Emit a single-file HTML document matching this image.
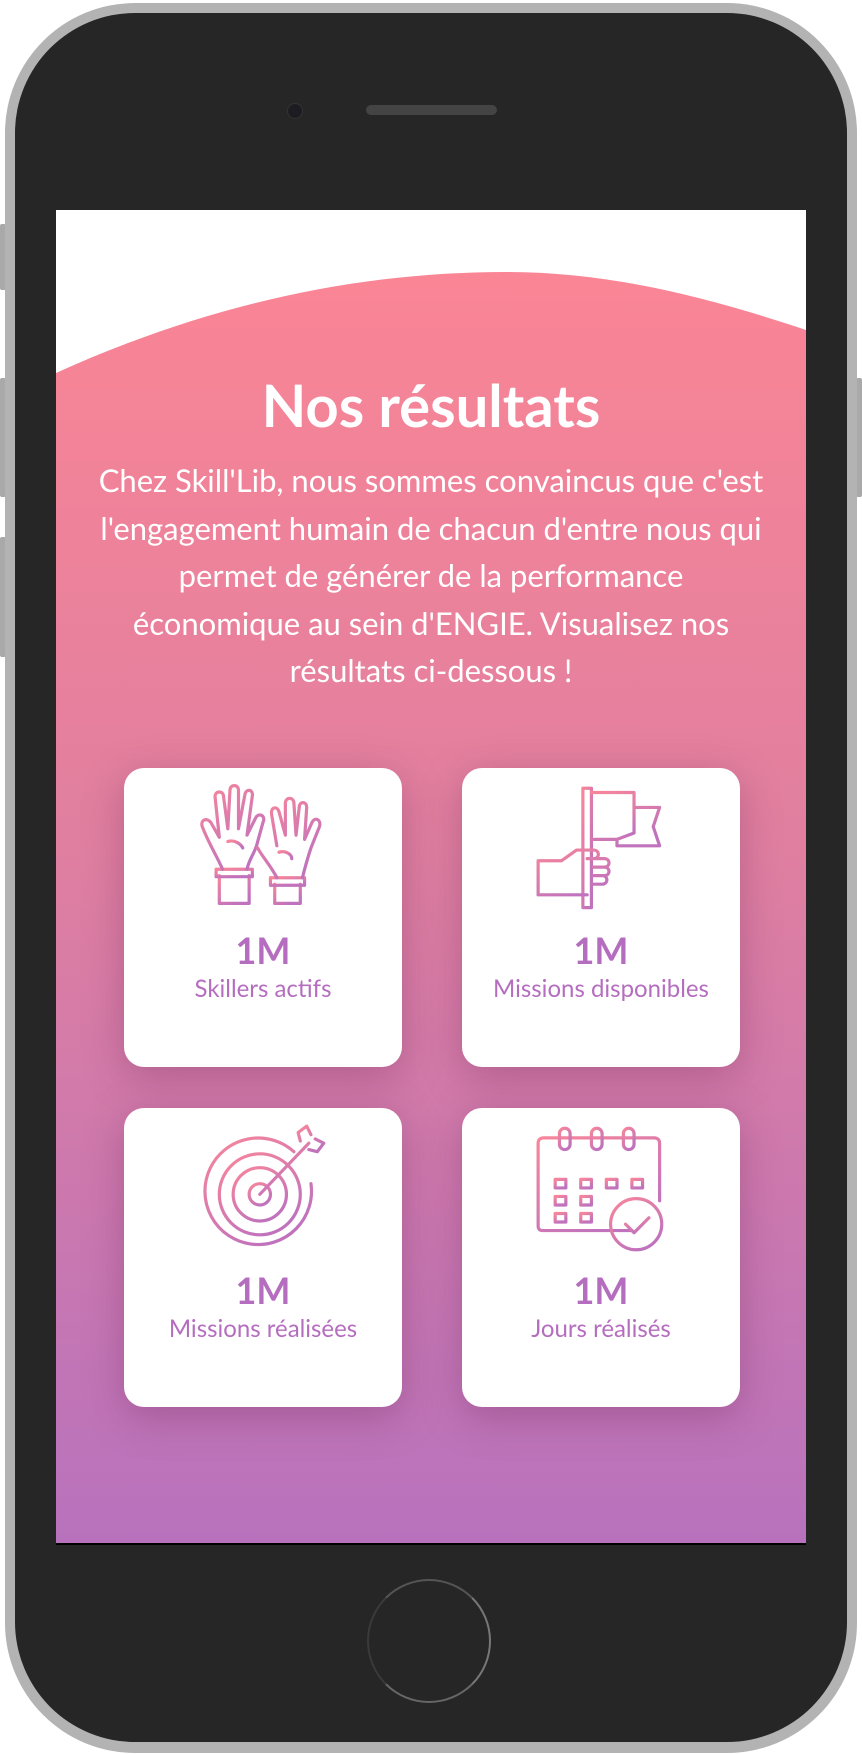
<!DOCTYPE html>
<html><head><meta charset="utf-8">
<style>
html,body{margin:0;padding:0;background:#fff;}
body{width:862px;height:1754px;position:relative;overflow:hidden;font-family:"Lato","Liberation Sans",sans-serif;}
.outer{position:absolute;left:5px;top:3px;width:852px;height:1750px;border-radius:130px;background:#b3b3b3;}
.inner{position:absolute;left:15px;top:13px;width:832px;height:1729px;border-radius:120px;background:#262626;}
.btn{position:absolute;background:#a9a9a9;width:6px;border-radius:2px;}
.screen{position:absolute;left:56px;top:210px;width:750px;height:1333px;background:#fff;overflow:hidden;border-bottom:2px solid #000;}
.cam{position:absolute;left:287px;top:103px;width:14px;height:14px;border-radius:50%;background:#1c1c22;border:1px solid #333;}
.spk{position:absolute;left:366px;top:105px;width:131px;height:10px;border-radius:5px;background:#444;}
.home{position:absolute;left:367px;top:1579px;width:124px;height:124px;border-radius:50%;border:2px solid #3a3a3a;box-sizing:border-box;border-color:#555 #777 #666 #3a3a3a;}
h1{position:absolute;left:0;width:750px;top:161px;margin:0;text-align:center;color:#fff;font-size:58px;font-weight:bold;}
p.t{position:absolute;left:-20px;width:790px;top:247px;margin:0;text-align:center;color:#fff;font-size:31px;line-height:47.5px;}
.card{position:absolute;width:278px;height:299px;background:#fff;border-radius:20px;box-shadow:0 10px 40px rgba(110,40,90,.35);text-align:center;}
.card svg{position:absolute;left:74px;top:16px;}
.num{position:absolute;left:0;right:0;top:160px;color:#b56ebf;font-size:36px;font-weight:bold;}
.lab{position:absolute;left:0;right:0;top:206px;color:#b56ebf;font-size:24px;}
</style></head><body>
<div class="btn" style="left:0;top:224px;height:66px"></div>
<div class="btn" style="left:0;top:378px;height:119px"></div>
<div class="btn" style="left:0;top:537px;height:120px"></div>
<div class="btn" style="left:856px;top:378px;height:119px"></div>
<div class="outer"></div>
<div class="inner"></div>
<div class="cam"></div><div class="spk"></div>
<div class="home"></div>
<div class="screen">
<svg width="750" height="1333" style="position:absolute;left:0;top:0">
<defs>
<linearGradient id="bg" x1="0" y1="0" x2="0" y2="1"><stop offset="0" stop-color="#fa8595"/><stop offset="0.45" stop-color="#e07fa0"/><stop offset="1" stop-color="#b872bd"/></linearGradient>
</defs>
<path d="M0 163 C150 95 300 62 450 62 C560 62 660 90 750 120 L750 1333 L0 1333 Z" fill="url(#bg)"/>
</svg>
<h1>Nos résultats</h1>
<p class="t">Chez Skill'Lib, nous sommes convaincus que c'est<br>l'engagement humain de chacun d'entre nous qui<br>permet de générer de la performance<br>économique au sein d'ENGIE. Visualisez nos<br>résultats ci-dessous !</p>

<svg width="0" height="0" style="position:absolute"><defs><linearGradient id="ig" x1="0" y1="0" x2="0.6" y2="1"><stop offset="0" stop-color="#f8869a"/><stop offset="1" stop-color="#c072bd"/></linearGradient></defs></svg>

<div class="card" style="left:68px;top:558px">
<svg width="130" height="130" viewBox="0 0 122 122" fill="none" stroke="url(#ig)" stroke-width="3" stroke-linecap="round" stroke-linejoin="round">
<path d="M20 86 L20 112 L48 112 L48 86"/><path d="M17 80 h34 v7 h-34z"/><path d="M23 80 C18 68 10 56 4 40 C2 34 8 31 12 36 L20 50 L16 12 C16 6 24 6 24 12 L28 42 L30 6 C30 0 38 0 38 6 L38 42 L44 10 C45 4 52 5 51 11 L46 48 L54 32 C57 26 64 30 61 36 L56 54 C54 64 48 70 46 80"/><path d="M28 54 C34 52 40 56 42 60"/>
<path d="M72 94 L72 112 L96 112 L96 94"/><path d="M68 88 h32 v7 h-32z"/><path d="M74 88 C68 76 60 68 56 60 M98 88 C100 80 102 72 106 60 L114 40 C116 34 110 30 107 36 L100 52 L102 22 C102 16 95 16 95 22 L92 48 L90 18 C90 12 82 12 82 18 L82 48 L76 26 C74 20 68 22 69 28 L74 58"/><path d="M76 64 C82 62 88 66 88 70"/>
</svg>
<div class="num">1M</div><div class="lab">Skillers actifs</div></div>

<div class="card" style="left:406px;top:558px">
<svg width="130" height="130" viewBox="0 0 122 122" fill="none" stroke="url(#ig)" stroke-width="3" stroke-linecap="round" stroke-linejoin="round">
<path d="M44 4 h8 v112 h-8z"/><path d="M52 8 h40 v14 h24 l-6 18 l6 18 h-40 v-6 h-24"/><path d="M92 22 v24 l-16 6"/>
<path d="M2 72 h22 l14 -10 h16 c6 0 6 8 0 8 h-6 M54 70 h10 c6 0 6 8 0 8 h-10 M54 78 h10 c6 0 6 8 0 8 h-10 M54 86 h8 c6 0 6 8 0 8 h-10 M2 72 v32 h46"/><path d="M24 72 v32"/>
</svg>
<div class="num">1M</div><div class="lab">Missions disponibles</div></div>

<div class="card" style="left:68px;top:898px">
<svg width="130" height="130" viewBox="0 0 122 122" fill="none" stroke="url(#ig)" stroke-width="3" stroke-linecap="round" stroke-linejoin="round">
<path d="M90 26 A50 50 0 1 0 106 56"/><circle cx="58" cy="66" r="38"/><circle cx="58" cy="66" r="25"/><circle cx="58" cy="66" r="10"/>
<path d="M58 66 L104 18"/><path d="M96 16 L94 8 L102 2 L106 10 M104 24 L112 26 L118 18 L110 14"/>
</svg>
<div class="num">1M</div><div class="lab">Missions réalisées</div></div>

<div class="card" style="left:406px;top:898px">
<svg width="130" height="130" viewBox="0 0 122 122" fill="none" stroke="url(#ig)" stroke-width="3" stroke-linecap="round" stroke-linejoin="round">
<path d="M90 100 H6 c-3 0 -4 -2 -4 -4 V18 c0 -3 2 -5 5 -5 h104 c3 0 5 2 5 5 V72"/><path d="M2 36 h114"/>
<rect x="22" y="4" width="10" height="20" rx="5"/><rect x="52" y="4" width="10" height="20" rx="5"/><rect x="82" y="4" width="10" height="20" rx="5"/>
<rect x="18" y="52" width="10" height="8"/><rect x="42" y="52" width="10" height="8"/><rect x="66" y="52" width="10" height="8"/><rect x="90" y="52" width="10" height="8"/>
<rect x="18" y="68" width="10" height="8"/><rect x="42" y="68" width="10" height="8"/><rect x="18" y="84" width="10" height="8"/><rect x="42" y="84" width="10" height="8"/>
<circle cx="94" cy="94" r="24"/><path d="M84 94 l8 8 l14 -14"/>
</svg>
<div class="num">1M</div><div class="lab">Jours réalisés</div></div>
</div>
</body></html>
